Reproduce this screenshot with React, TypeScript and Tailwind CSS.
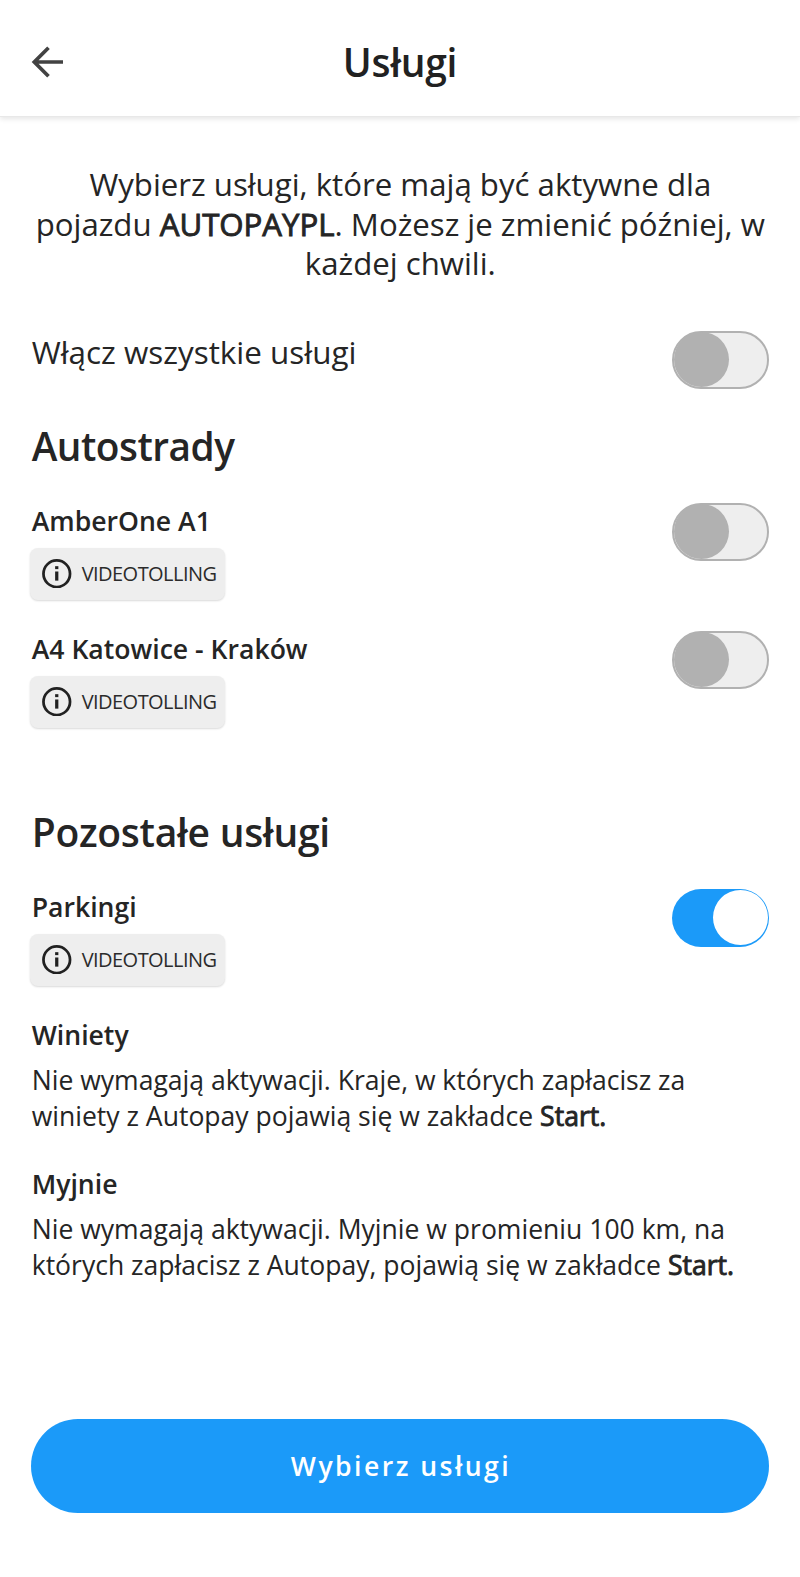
import React from "react";

function Toggle({ on = false }: { on?: boolean }) {
  return (
    <div
      className={
        on
          ? "flex h-[58px] w-[97px] shrink-0 items-center justify-end rounded-full bg-[#1b9af9] pr-[1.5px]"
          : "flex h-[58px] w-[97px] shrink-0 items-center rounded-full border-2 border-[#b1b1b1] bg-[#eeeeee]"
      }
    >
      <div className={on ? "size-[55px] rounded-full bg-white" : "size-[55px] rounded-full bg-[#b1b1b1]"} />
    </div>
  );
}

function Badge() {
  return (
    <div className="-ml-[1.5px] flex h-[52px] w-[195px] items-center rounded-lg bg-[#eeeeee] pl-3 shadow-[0_1px_2px_rgba(0,0,0,0.15)]">
      <svg className="size-[29.5px]" viewBox="0 0 30 30" fill="none" stroke="#212121">
        <circle cx="15" cy="15" r="13.5" strokeWidth="2.8" />
        <path d="M15 12.7V22" strokeWidth="3.3" />
        <path d="M15 7.3v3" strokeWidth="3.3" />
      </svg>
      <span className="ml-[10px] whitespace-nowrap text-[20px] tracking-[-0.55px] text-[#2b2b2b]">VIDEOTOLLING</span>
    </div>
  );
}

function Service({ name, on }: { name: string; on?: boolean }) {
  return (
    <div className="flex h-[100px] items-start justify-between">
      <div>
        <h3 className="h-[46px] whitespace-nowrap text-[26.6px] leading-[38px] font-semibold">{name}</h3>
        <Badge />
      </div>
      <div className="pt-px">
        <Toggle on={on} />
      </div>
    </div>
  );
}

function Strong({ children }: { children: React.ReactNode }) {
  return <b className="font-normal [-webkit-text-stroke:0.9px]">{children}</b>;
}

export default function App() {
  return (
    <div className="flex h-[1577px] w-[800px] flex-col bg-white font-['Open_Sans',sans-serif] text-[#212121]">
      <header className="grid h-[117px] grid-cols-[1fr_auto_1fr] items-center border-b border-[#e8e8e8] px-[31px] pt-[9px] shadow-[0_2px_5px_rgba(0,0,0,0.1)]">
        <svg className="-mt-0.5 size-8" viewBox="0 0 32 32" fill="none" stroke="#424242" strokeWidth="3.7">
          <path d="M32 16H4M17.5 1.8 3.3 16l14.2 14.2" />
        </svg>
        <h1 className="text-[39px] font-semibold tracking-[-0.3px]">Usługi</h1>
      </header>
      <main className="flex flex-col pr-[31px] pl-[31.7px] text-[#252525]">
        <p className="mt-[48px] text-center text-[31.2px] leading-[39.5px] whitespace-nowrap">
          Wybierz usługi, które mają być aktywne dla<br />
          pojazdu <Strong>AUTOPAYPL</Strong>. Możesz je zmienić później, w<br />
          każdej chwili.
        </p>
        <div className="mt-[47px] flex justify-between">
          <span className="text-[31.4px] leading-[42px]">Włącz wszystkie usługi</span>
          <Toggle />
        </div>
        <h2 className="mt-[29px] text-[38.8px] leading-[56px] font-semibold tracking-[-0.5px]">Autostrady</h2>
        <div className="mt-[28px] flex flex-col gap-[28px]">
          <Service name="AmberOne A1" />
          <Service name="A4 Katowice - Kraków" />
        </div>
        <h2 className="mt-[74px] text-[39px] leading-[56px] font-semibold tracking-[-0.28px]">Pozostałe usługi</h2>
        <div className="mt-[28px]">
          <Service name="Parkingi" on />
        </div>
        <h3 className="mt-[28px] text-[26.6px] leading-[38px] font-semibold">Winiety</h3>
        <p className="mt-[8px] text-[26.55px] leading-[36px] whitespace-nowrap">
          Nie wymagają aktywacji. Kraje, w których zapłacisz za<br />
          winiety z Autopay pojawią się w zakładce <Strong>Start.</Strong>
        </p>
        <h3 className="mt-[31px] text-[26.6px] leading-[38px] font-semibold">Myjnie</h3>
        <p className="mt-[8px] text-[26.55px] leading-[36px] whitespace-nowrap">
          Nie wymagają aktywacji. Myjnie w promieniu 100 km, na<br />
          których zapłacisz z Autopay, pojawią się w zakładce <Strong>Start.</Strong>
        </p>
      </main>
      <button className="mx-[31px] mt-auto mb-[64px] h-[94px] shrink-0 rounded-full bg-[#1b9af9] pt-0.5 pl-[2px] text-[26.6px] font-semibold tracking-[2.45px] text-white">
        Wybierz usługi
      </button>
    </div>
  );
}
